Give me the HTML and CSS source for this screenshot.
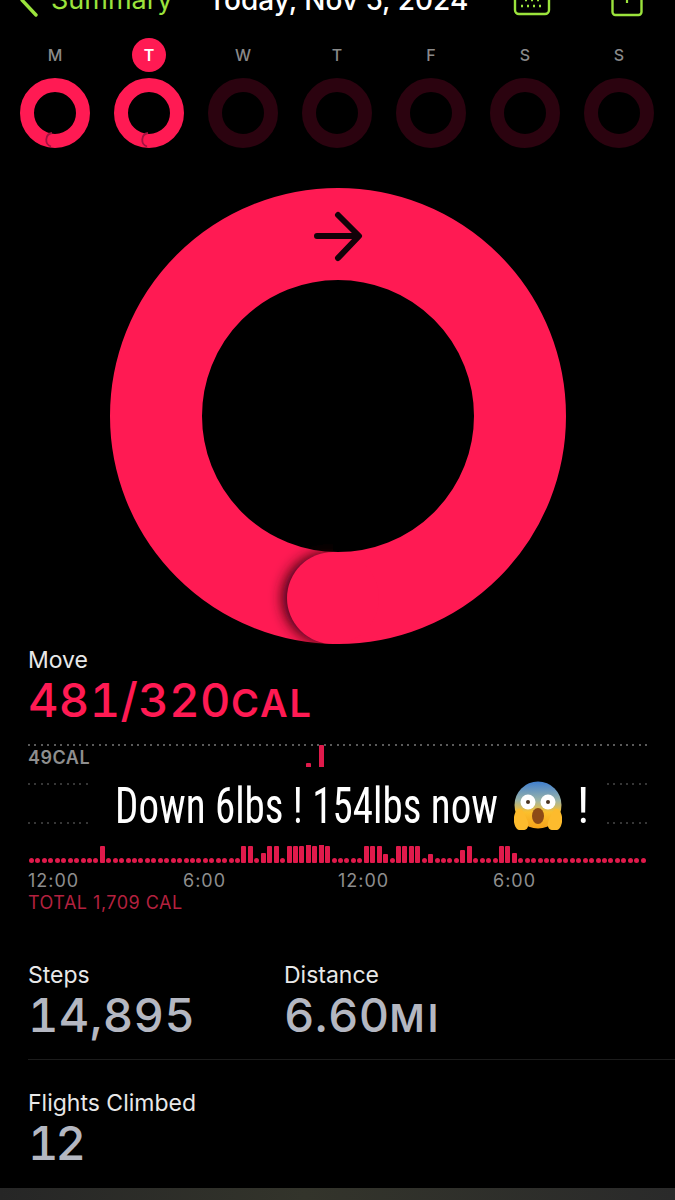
FILE: index.html
```html
<!DOCTYPE html>
<html lang="en">
<head>
    <meta charset="UTF-8">
    <meta name="viewport" content="width=device-width, initial-scale=1.0">
    <title>Activity</title>
    <link rel="stylesheet" href="styles.css">
</head>
<body>
    <!-- Top navigation, cut by the top of the screenshot -->
    <div class="nav">
        <svg class="nav-back" width="22" height="34" viewBox="0 0 22 34"><path d="M19 2 5 17l14 15" fill="none" stroke="#9be33c" stroke-width="3.4" stroke-linecap="round" stroke-linejoin="round"/></svg>
        <span class="nav-summary">Summary</span>
        <span class="nav-date">Today, Nov 5, 2024</span>
        <svg class="nav-calendar" width="38" height="34" viewBox="0 0 38 34">
            <rect x="2" y="2" width="34" height="29" rx="4" fill="none" stroke="#9be33c" stroke-width="2.4"/>
            <path d="M12 17h2M18 17h2M24 17h2M30 17h0M8 23h2M14 23h2M20 23h2M26 23h2" stroke="#9be33c" stroke-width="2.4"/>
        </svg>
        <svg class="nav-add" width="32" height="36" viewBox="0 0 32 36">
            <rect x="1.5" y="2" width="29" height="32" rx="3" fill="none" stroke="#9be33c" stroke-width="2.4"/>
            <path d="M16 12v10M11 17h10" stroke="#9be33c" stroke-width="2.2"/>
        </svg>
    </div>

    <!-- Week strip -->
    <div class="week">
        <div class="day">
            <span class="day-label">M</span>
            <svg class="day-ring" viewBox="0 0 70 70">
                <circle cx="35" cy="35" r="28" fill="none" stroke="#ff1a53" stroke-width="14"/>
                <path d="M32 55a7 7 0 0 0-1 13.500" fill="none" stroke="#a31240" stroke-width="1.800"/>
            </svg>
        </div>
        <div class="day">
            <span class="day-label day-label-today">T</span>
            <svg class="day-ring" viewBox="0 0 70 70">
                <circle cx="35" cy="35" r="28" fill="none" stroke="#ff1a53" stroke-width="14"/>
                <path d="M34 55a7 7 0 0 0-1 13.500" fill="none" stroke="#a31240" stroke-width="1.800"/>
            </svg>
        </div>
        <div class="day">
            <span class="day-label">W</span>
            <svg class="day-ring" viewBox="0 0 70 70"><circle cx="35" cy="35" r="28" fill="none" stroke="#2b030f" stroke-width="14"/></svg>
        </div>
        <div class="day">
            <span class="day-label">T</span>
            <svg class="day-ring" viewBox="0 0 70 70"><circle cx="35" cy="35" r="28" fill="none" stroke="#2b030f" stroke-width="14"/></svg>
        </div>
        <div class="day">
            <span class="day-label">F</span>
            <svg class="day-ring" viewBox="0 0 70 70"><circle cx="35" cy="35" r="28" fill="none" stroke="#2b030f" stroke-width="14"/></svg>
        </div>
        <div class="day">
            <span class="day-label">S</span>
            <svg class="day-ring" viewBox="0 0 70 70"><circle cx="35" cy="35" r="28" fill="none" stroke="#2b030f" stroke-width="14"/></svg>
        </div>
        <div class="day">
            <span class="day-label">S</span>
            <svg class="day-ring" viewBox="0 0 70 70"><circle cx="35" cy="35" r="28" fill="none" stroke="#2b030f" stroke-width="14"/></svg>
        </div>
    </div>

    <!-- Big move ring -->
    <div class="ring-wrap">
        <svg class="ring" width="456" height="456" viewBox="0 0 456 456">
            <defs>
                <filter id="capBlur" x="-40%" y="-40%" width="180%" height="180%"><feGaussianBlur stdDeviation="7"/></filter>
                <clipPath id="capClip"><path d="M0 330h223v126H0z"/></clipPath>
            </defs>
            <circle cx="228" cy="228" r="182" fill="none" stroke="#ff1a53" stroke-width="92"/>
            <g clip-path="url(#capClip)">
                <circle cx="218" cy="410" r="45" fill="#2a0010" filter="url(#capBlur)"/>
            </g>
            <circle cx="223" cy="410" r="46" fill="#ff1a53"/>
            <path d="M207 48h41M228 27l21 21-21 22" fill="none" stroke="#120208" stroke-width="6" stroke-linecap="round" stroke-linejoin="round"/>
        </svg>
    </div>

    <!-- Move stats -->
    <div class="move">
        <div class="stat-name">Move</div>
        <div class="move-value">481/320<span class="move-unit">CAL</span></div>
    </div>

    <!-- Hourly chart -->
    <div class="chart">
        <div class="chart-line chart-line-top"></div>
        <div class="chart-line chart-line-mid"></div>
        <div class="chart-line chart-line-low"></div>
        <span class="chart-max">49CAL</span>
        <div class="bars" id="bars"></div>
        <!-- Caption pasted on top of the screenshot -->
        <div class="caption">
            <span class="caption-text">Down 6lbs ! 154lbs now</span>
            <svg class="caption-emoji" width="48" height="50" viewBox="0 0 48 50">
                <defs>
                    <linearGradient id="faceFill" x1="0" y1="0" x2="0" y2="1">
                        <stop offset="0" stop-color="#3f7fd0"/>
                        <stop offset="0.4" stop-color="#9bb4a8"/>
                        <stop offset="0.65" stop-color="#fbc02d"/>
                        <stop offset="1" stop-color="#f6a21a"/>
                    </linearGradient>
                </defs>
                <circle cx="24" cy="24" r="23.5" fill="url(#faceFill)"/>
                <ellipse cx="14" cy="21" rx="7.5" ry="7.5" fill="#fff"/>
                <ellipse cx="34" cy="21" rx="7.5" ry="7.5" fill="#fff"/>
                <circle cx="14" cy="21" r="2" fill="#4a3320"/>
                <circle cx="34" cy="21" r="2" fill="#4a3320"/>
                <ellipse cx="24" cy="35" rx="6" ry="8" fill="#8d4a16"/>
                <path d="M0 36c1-6 4-9 7-8 2 1 5 8 7 13 1 5-1 8-5 8H5c-3 0-6-7-5-13z" fill="#fdbb2d"/>
                <path d="M48 36c-1-6-4-9-7-8-2 1-5 8-7 13-1 5 1 8 5 8h4c3 0 6-7 5-13z" fill="#fdbb2d"/>
            </svg>
            <span class="caption-bang">!</span>
        </div>
    </div>

    <div class="axis">
        <span>12:00</span>
        <span>6:00</span>
        <span>12:00</span>
        <span>6:00</span>
    </div>
    <div class="chart-total">TOTAL 1,709 CAL</div>

    <!-- Steps and distance -->
    <div class="stats-row">
        <div class="stat stat-steps">
            <div class="stat-name">Steps</div>
            <div class="stat-value">14,895</div>
        </div>
        <div class="stat">
            <div class="stat-name">Distance</div>
            <div class="stat-value">6.60<span class="stat-unit">MI</span></div>
        </div>
    </div>

    <div class="stats-row stats-row-flights">
        <div class="stat">
            <div class="stat-name">Flights Climbed</div>
            <div class="stat-value stat-value-short">12</div>
        </div>
    </div>

    <div class="tab-edge"></div>

    <script src="chart.js"></script>
</body>
</html>
```

FILE: styles.css
```css
* {
    margin: 0;
    padding: 0;
    box-sizing: border-box;
    font-family: 'Inter', 'Liberation Sans', sans-serif;
}

body {
    width: 675px;
    height: 1200px;
    overflow: hidden;
    background: #000;
    color: #fff;
    position: relative;
}

/* Top navigation */
.nav {
    display: flex;
    align-items: flex-end;
    height: 34px;
    margin-top: -17px;
    padding-left: 17px;
    color: #9be33c;
    font-size: 27px;
}

.nav-summary {
    margin-left: 12px;
    width: 157px;
    line-height: 34px;
}

.nav-date {
    color: #fff;
    width: 305px;
    font-size: 28px;
    line-height: 34px;
    font-weight: 500;
    white-space: nowrap;
}

.nav-calendar {
    margin-right: 60px;
}

/* Week strip */
.week {
    display: flex;
    padding-left: 8px;
    margin-top: 21px;
}

.day {
    width: 94px;
    display: flex;
    flex-direction: column;
    align-items: center;
}

.day-label {
    width: 34px;
    height: 34px;
    line-height: 34px;
    text-align: center;
    color: #8a8a8a;
    font-size: 16px;
    font-weight: 500;
}

.day-label-today {
    background: #ff1a53;
    color: #fff;
    border-radius: 50%;
    font-weight: 600;
}

.day-ring {
    width: 70px;
    height: 70px;
    margin-top: 6px;
}

/* Big ring */
.ring-wrap {
    display: flex;
    padding-left: 110px;
    margin-top: 40px;
}

.ring {
    display: block;
}

/* Move stats */
.move {
    padding-left: 28px;
    margin-top: 2px;
}

.stat-name {
    font-size: 23px;
    line-height: 28px;
    color: #e8e8e8;
}

.move-value {
    font-size: 47px;
    line-height: 52px;
    font-weight: 500;
    letter-spacing: 0.4px;
    font-feature-settings: 'tnum';
    color: #ff1a53;
}

.move-unit {
    font-size: 38px;
    font-weight: 600;
    letter-spacing: 2px;
}

/* Hourly chart */
.chart {
    position: relative;
    width: 619px;
    height: 119px;
    margin: 15px 0 0 28px;
}

.chart-line {
    position: absolute;
    left: 0;
    right: 0;
    height: 2px;
    background: repeating-linear-gradient(90deg, #5a5a5a 0 2px, transparent 2px 6.43px);
}

.chart-line-top {
    top: 0;
}

.chart-line-mid {
    top: 39px;
    opacity: 0.6;
}

.chart-line-low {
    top: 78px;
    opacity: 0.6;
}

.chart-max {
    position: absolute;
    left: 0;
    top: 3px;
    font-size: 18px;
    line-height: 22px;
    font-weight: 600;
    letter-spacing: 0.5px;
    color: #8e8e8e;
}

.bars {
    position: absolute;
    left: 1px;
    right: 1px;
    bottom: 0;
    height: 119px;
    display: flex;
    align-items: flex-end;
    justify-content: space-between;
}

.bar {
    width: 5px;
    background: #e01a4b;
    border-radius: 1px;
}

.bar-dot {
    border-radius: 50%;
}

.caption {
    position: absolute;
    left: 64px;
    top: 23px;
    width: 513px;
    height: 78px;
    background: #000;
    display: flex;
    align-items: center;
    padding-left: 23px;
}

.caption-text,
.caption-bang {
    font-family: 'Roboto', 'Liberation Sans', sans-serif;
    font-stretch: 75%;
    font-size: 50px;
    line-height: 78px;
    white-space: nowrap;
    color: #fff;
    flex-shrink: 0;
}

/* No font here is as narrow as the caption's, so squeeze the line */
.caption-text {
    width: 381px;
    transform: scaleX(0.82);
    transform-origin: left center;
}

.caption-emoji {
    margin-left: 18px;
    flex-shrink: 0;
}

.caption-bang {
    margin-left: 15px;
}

.axis {
    display: grid;
    grid-template-columns: repeat(4, 155px);
    padding-left: 28px;
    margin-top: 7px;
    font-size: 18px;
    letter-spacing: 1px;
    line-height: 22px;
    color: #8e8e8e;
}

.chart-total {
    padding-left: 28px;
    font-size: 18px;
    letter-spacing: 0.5px;
    line-height: 22px;
    color: #b3213f;
}

/* Steps, distance, flights */
.stats-row {
    display: flex;
    margin-top: 47px;
    margin-left: 28px;
    padding-bottom: 15px;
    border-bottom: 1px solid #1c1c1c;
}

.stat-steps {
    width: 256px;
}

.stat-value {
    font-size: 47px;
    line-height: 52px;
    font-weight: 500;
    letter-spacing: 0.4px;
    font-feature-settings: 'tnum';
    color: #b4b7c1;
}

.stat-value-short {
    letter-spacing: -3px;
}

.stat-unit {
    font-size: 38px;
    font-weight: 600;
    letter-spacing: 3px;
}

.stats-row-flights {
    margin-top: 29px;
    border-bottom: none;
}

.tab-edge {
    position: absolute;
    left: 0;
    right: 0;
    bottom: 0;
    height: 12px;
    background: linear-gradient(90deg, #262626, #33342b 45%, #2a2a2a);
}
```

FILE: chart.js
```js
// Height of each quarter hour bar, anything not listed is a dot
const heights = {
    11: 17,
    33: 17, 34: 17, 36: 10, 37: 17, 38: 17,
    40: 17, 41: 17, 42: 17, 43: 100, 44: 17, 45: 118, 46: 17,
    52: 17, 53: 17, 54: 17, 55: 9, 57: 17, 58: 17, 59: 17, 60: 17, 62: 9,
    67: 13, 68: 17,
    73: 17, 74: 17, 75: 10
};

const bars = document.getElementById('bars');
for (let i = 0; i < 96; i++) {
    const bar = document.createElement('div');
    bar.className = heights[i] ? 'bar' : 'bar bar-dot';
    bar.style.height = (heights[i] || 5) + 'px';
    bars.appendChild(bar);
}
```
